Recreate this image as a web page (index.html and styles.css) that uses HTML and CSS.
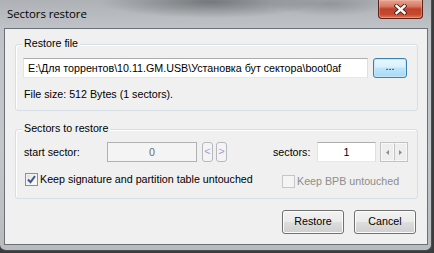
FILE: index.html
```html
<!DOCTYPE html>
<html>
<head>
<meta charset="utf-8">
<link rel="stylesheet" href="styles.css">
</head>
<body>
<div class="window">
  <div class="titlebar">
    <span class="title">Sectors restore</span>
    <div class="close">
      <svg width="13" height="11" viewBox="0 0 13 11">
        <path d="M2.5 2 L10.5 9 M10.5 2 L2.5 9" stroke="#4a1a12" stroke-width="4.2" stroke-linecap="square"/>
        <path d="M2.5 2 L10.5 9 M10.5 2 L2.5 9" stroke="#ffffff" stroke-width="2.4" stroke-linecap="square"/>
      </svg>
    </div>
  </div>
  <div class="client">
    <div class="group g1">
      <span class="gtitle">Restore file</span>
      <div class="row">
        <div class="textbox path">E:\Для торрентов\10.11.GM.USB\Установка бут сектора\boot0af</div>
        <div class="btn-browse">...</div>
      </div>
      <div class="info">File size: 512 Bytes (1 sectors).</div>
    </div>
    <div class="group g2">
      <span class="gtitle">Sectors to restore</span>
      <div class="row r1">
        <span class="lbl lbl-start">start sector:</span>
        <div class="textbox disabled num start">0</div>
        <div class="arrowbtn a-left">&lt;</div>
        <div class="arrowbtn a-right">&gt;</div>
        <span class="lbl lbl-sectors">sectors:</span>
        <div class="textbox num count">1</div>
        <div class="spin">
          <div class="spinhalf">
            <svg width="3" height="5" viewBox="0 0 3 5"><path d="M3 0 L0 2.5 L3 5 Z" fill="#8c8c8c"/></svg>
          </div>
          <div class="spinhalf">
            <svg width="3" height="5" viewBox="0 0 3 5"><path d="M0 0 L3 2.5 L0 5 Z" fill="#8c8c8c"/></svg>
          </div>
        </div>
      </div>
      <div class="row r2">
        <label class="check on">
          <span class="box checked">
            <svg width="11" height="11" viewBox="0 0 11 11"><path d="M2 5.5 L4.5 8.2 L9 2.2" stroke="#3f5a8f" stroke-width="2" fill="none"/></svg>
          </span>
          <span>Keep signature and partition table untouched</span>
        </label>
        <label class="check off">
          <span class="box"></span>
          <span>Keep BPB untouched</span>
        </label>
      </div>
    </div>
    <div class="buttons">
      <div class="btn">Restore</div>
      <div class="btn">Cancel</div>
    </div>
  </div>
</div>
</body>
</html>
```

FILE: styles.css
```css
* { box-sizing: border-box; }
html, body { margin: 0; padding: 0; }
body {
  width: 434px;
  height: 253px;
  overflow: hidden;
  background: #3a3c3e;
  font-family: "Liberation Sans", Arial, sans-serif;
  font-size: 10.7px;
  color: #000;
}
.window {
  width: 432px;
  height: 251px;
  padding: 0 3px 5px 4px;
  border-right: 1px solid #4a4d50;
  border-bottom: 1px solid #4a4d50;
  border-radius: 0 0 6px 6px;
  background:
    radial-gradient(ellipse 110px 16px at 210px 2px, rgba(70,72,75,0.55), rgba(70,72,75,0) 100%),
    radial-gradient(ellipse 60px 12px at 330px 4px, rgba(90,92,95,0.35), rgba(90,92,95,0) 100%),
    linear-gradient(to bottom, #aeb2b6 0, #bfc3c7 28px, #c4c7ca 60%, #b9bcbf 100%);
  display: flex;
  flex-direction: column;
}
.titlebar {
  height: 28px;
  display: flex;
  align-items: flex-start;
  justify-content: space-between;
  padding-left: 3px;
  padding-right: 5px;
}
.title {
  font-family: "Open Sans", "Liberation Sans", sans-serif;
  font-size: 11.5px;
  color: #000;
  margin-top: 6px;
  letter-spacing: -0.1px;
}
.close {
  width: 45px;
  height: 19px;
  border: 1px solid #5b2217;
  border-top: none;
  border-radius: 0 0 4px 4px;
  background: linear-gradient(to bottom, #e6a492 0, #d77a64 35%, #c0412a 50%, #c9482f 80%, #e07a5a 100%);
  box-shadow: inset 0 0 0 1px rgba(255,200,180,0.35);
  display: flex;
  align-items: center;
  justify-content: center;
}
.client {
  flex: 1;
  background: #f0f0f0;
  border: 1px solid #6a7178;
  display: flex;
  flex-direction: column;
}
.group {
  position: relative;
  border: 1px solid #d5dfe5;
  border-radius: 3px;
  box-shadow: inset 1px 1px 0 #ffffff;
  margin-left: 10px;
  margin-right: 9px;
}
.gtitle {
  position: absolute;
  top: -8px;
  left: 6px;
  padding: 0 2px;
  background: #f0f0f0;
  line-height: 13px;
}
.g1 {
  margin-top: 15px;
  height: 67px;
  padding: 12px 0 0 7px;
}
.g2 {
  margin-top: 18px;
  height: 70px;
  padding: 12px 0 0 8px;
}
.row { display: flex; align-items: center; }
.textbox {
  height: 20px;
  background: #fff;
  border: 1px solid #abadb3;
  border-left-color: #e2e3ea;
  border-right-color: #dbdfe6;
  border-bottom-color: #e3e9ef;
  line-height: 18px;
  white-space: nowrap;
  overflow: hidden;
}
.path {
  width: 345px;
  padding-left: 4px;
}
.btn-browse {
  margin-left: 5px;
  width: 34px;
  height: 20px;
  margin-top: 1px;
  border: 1px solid #3c7fb1;
  border-radius: 3px;
  background: linear-gradient(to bottom, #eaf6fd 0, #d9f0fc 45%, #bee6fd 50%, #a7d9f5 100%);
  box-shadow: inset 0 0 0 1px #c5e7f9;
  text-align: center;
  line-height: 15px;
}
.info {
  margin-top: 10px;
  padding-left: 1px;
  line-height: 13px;
}
.r1 { height: 20px; }
.lbl { line-height: 13px; }
.lbl-start { width: 83px; }
.num { text-align: center; }
.start {
  width: 90px;
  background: #f4f4f4;
  border-color: #adb2b5;
  color: #6d6d6d;
}
.arrowbtn {
  width: 11px;
  height: 20px;
  border: 1px solid #b5b9bc;
  border-radius: 3px;
  background: #f4f4f4;
  color: #a79bcd;
  text-align: center;
  line-height: 17px;
  font-size: 11px;
}
.a-left { margin-left: 5px; }
.a-right { margin-left: 3px; }
.lbl-sectors { margin-left: 46px; width: 44px; }
.count { width: 59px; }
.spin {
  margin-left: 4px;
  width: 28px;
  height: 20px;
  display: flex;
  border: 1px solid #c3c3c3;
  background: #eeeeee;
}
.spinhalf {
  flex: 1;
  display: flex;
  align-items: center;
  justify-content: center;
  border: 1px solid #f8f8f8;
}
.spinhalf + .spinhalf { border-left: 1px solid #c3c3c3; }
.r2 { margin-top: 11px; align-items: flex-start; }
.check { display: flex; align-items: center; line-height: 13px; }
.on { width: 258px; }
.box {
  width: 13px;
  height: 13px;
  border: 1px solid #8e8f8f;
  background: linear-gradient(135deg, #dcdcdc 0, #f6f6f6 60%, #ffffff 100%);
  box-shadow: inset 0 0 0 1px #f4f4f4;
  margin-left: 1px;
  margin-right: 2px;
  display: flex;
  align-items: center;
  justify-content: center;
}
.off { margin-top: 2px; color: #8d8d8d; }
.off .box { margin-left: 0; border-color: #c6c6c6; background: #f4f4f4; box-shadow: none; }
.buttons {
  display: flex;
  justify-content: flex-end;
  gap: 10px;
  margin-top: 11px;
  padding-right: 11px;
}
.btn {
  width: 62px;
  height: 24px;
  border: 1px solid #707070;
  border-radius: 3px;
  background: linear-gradient(to bottom, #f2f2f2 0, #ebebeb 48%, #dddddd 52%, #cfcfcf 100%);
  box-shadow: inset 0 0 0 1px #fcfcfc;
  text-align: center;
  line-height: 21px;
}
```
